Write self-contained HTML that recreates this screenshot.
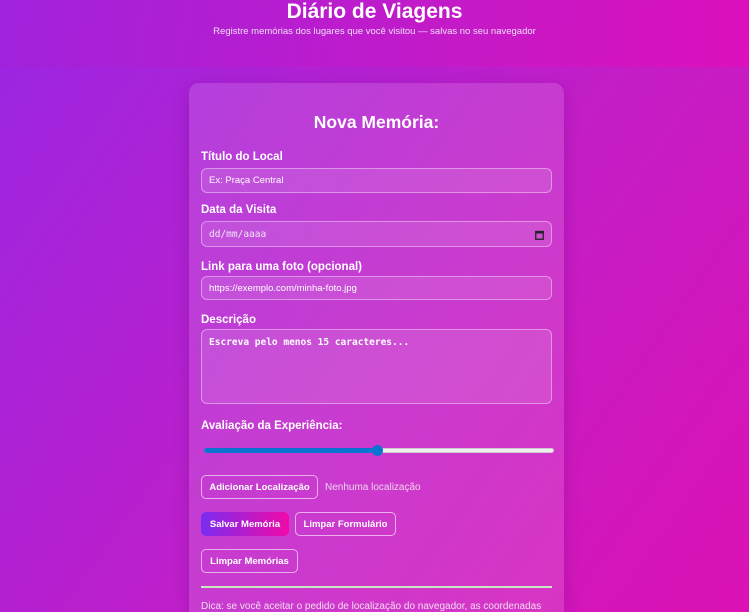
<!DOCTYPE html>
<html><head><meta charset="utf-8"><style>
*{box-sizing:border-box;margin:0;padding:0}
html,body{width:749px;height:612px;overflow:hidden}
body{font-family:"Liberation Sans",sans-serif;color:#fff;background:linear-gradient(125deg,#9a26e2 0%,#c21ec8 55%,#dc12b4 100%);position:relative}
.hdr{position:absolute;left:0;top:0;width:749px;height:67px;background:linear-gradient(100deg,#a022dc 0%,#c41ac8 60%,#dc10bc 100%)}
h1{position:absolute;top:0;left:0;width:749px;text-align:center;font-size:21px;font-weight:bold;line-height:24px}
.sub{position:absolute;top:26px;left:0;width:749px;text-align:center;font-size:9.5px;color:#eedcf5}
.card{position:absolute;left:189px;top:83px;width:375px;height:529px;border-radius:10px 10px 0 0;background:rgba(255,255,255,0.13);box-shadow:0 4px 16px rgba(80,0,100,0.25)}
.a{position:absolute}
h2{position:absolute;left:189px;width:375px;top:112px;text-align:center;font-size:17.5px;font-weight:bold}
.lab{position:absolute;left:201px;font-size:11.5px;font-weight:bold}
.in{position:absolute;left:201px;width:351px;border:1px solid rgba(255,255,255,0.4);border-radius:6px;background:rgba(255,255,255,0.1);font-size:9.5px;padding-left:7px;color:#fff;display:flex;align-items:center}
.mono{font-family:"DejaVu Sans Mono","Liberation Mono",monospace;font-size:9.5px}
.btn{position:absolute;height:24px;border:1px solid rgba(255,255,255,0.6);border-radius:5px;font-size:9.5px;font-weight:bold;display:flex;align-items:center;justify-content:center;white-space:nowrap}
</style></head><body>
<div class="hdr"></div>
<h1>Diário de Viagens</h1>
<div class="sub">Registre memórias dos lugares que você visitou — salvas no seu navegador</div>
<div class="card"></div>
<h2>Nova Memória:</h2>
<div class="lab" style="top:151px">Título do Local</div>
<div class="in" style="top:168px;height:25px">Ex: Praça Central</div>
<div class="lab" style="top:204px">Data da Visita</div>
<div class="in mono" style="top:221px;height:26px;color:#f2e4f6">dd/mm/aaaa
<svg style="position:absolute;right:7px;top:8px" width="9" height="10" viewBox="0 0 9 10"><rect x="0.75" y="1.5" width="7.5" height="7.75" fill="none" stroke="#222" stroke-width="1.3"/><rect x="0.75" y="1.5" width="7.5" height="2" fill="#222"/></svg></div>
<div class="lab" style="top:261px">Link para uma foto (opcional)</div>
<div class="in" style="top:276px;height:24px">https://exemplo.com/minha-foto.jpg</div>
<div class="lab" style="top:314px">Descrição</div>
<div class="in mono" style="top:329px;height:75px;padding-top:7px;font-weight:bold;align-items:flex-start">Escreva pelo menos 15 caracteres...</div>
<div class="lab" style="top:420px">Avaliação da Experiência:</div>
<div class="a" style="left:204px;top:448px;width:350px;height:5px;border-radius:3px;background:#efefef;border:1px solid #ccc"></div>
<div class="a" style="left:204px;top:448px;width:174px;height:5px;border-radius:3px;background:#0b74d0"></div>
<div class="a" style="left:372px;top:445px;width:11px;height:11px;border-radius:50%;background:#0b74d0"></div>
<div class="btn" style="left:201px;top:475px;width:117px">Adicionar Localização</div>
<div class="a" style="left:325px;top:482px;font-size:10px;color:#f0d4f0">Nenhuma localização</div>
<div class="btn" style="left:201px;top:512px;width:88px;border:none;background:linear-gradient(90deg,#7a2cf0,#f00aa8)">Salvar Memória</div>
<div class="btn" style="left:295px;top:512px;width:101px">Limpar Formulário</div>
<div class="btn" style="left:201px;top:549px;width:97px">Limpar Memórias</div>
<div class="a" style="left:201px;top:586px;width:351px;height:2px;background:#c8e8c0"></div>
<div class="a" style="left:201px;top:600px;width:351px;height:12px;overflow:hidden;font-size:10px;color:#f2dcf2;line-height:13px">Dica: se você aceitar o pedido de localização do navegador, as coordenadas serão salvas junto com a memória.</div>
</body></html>
